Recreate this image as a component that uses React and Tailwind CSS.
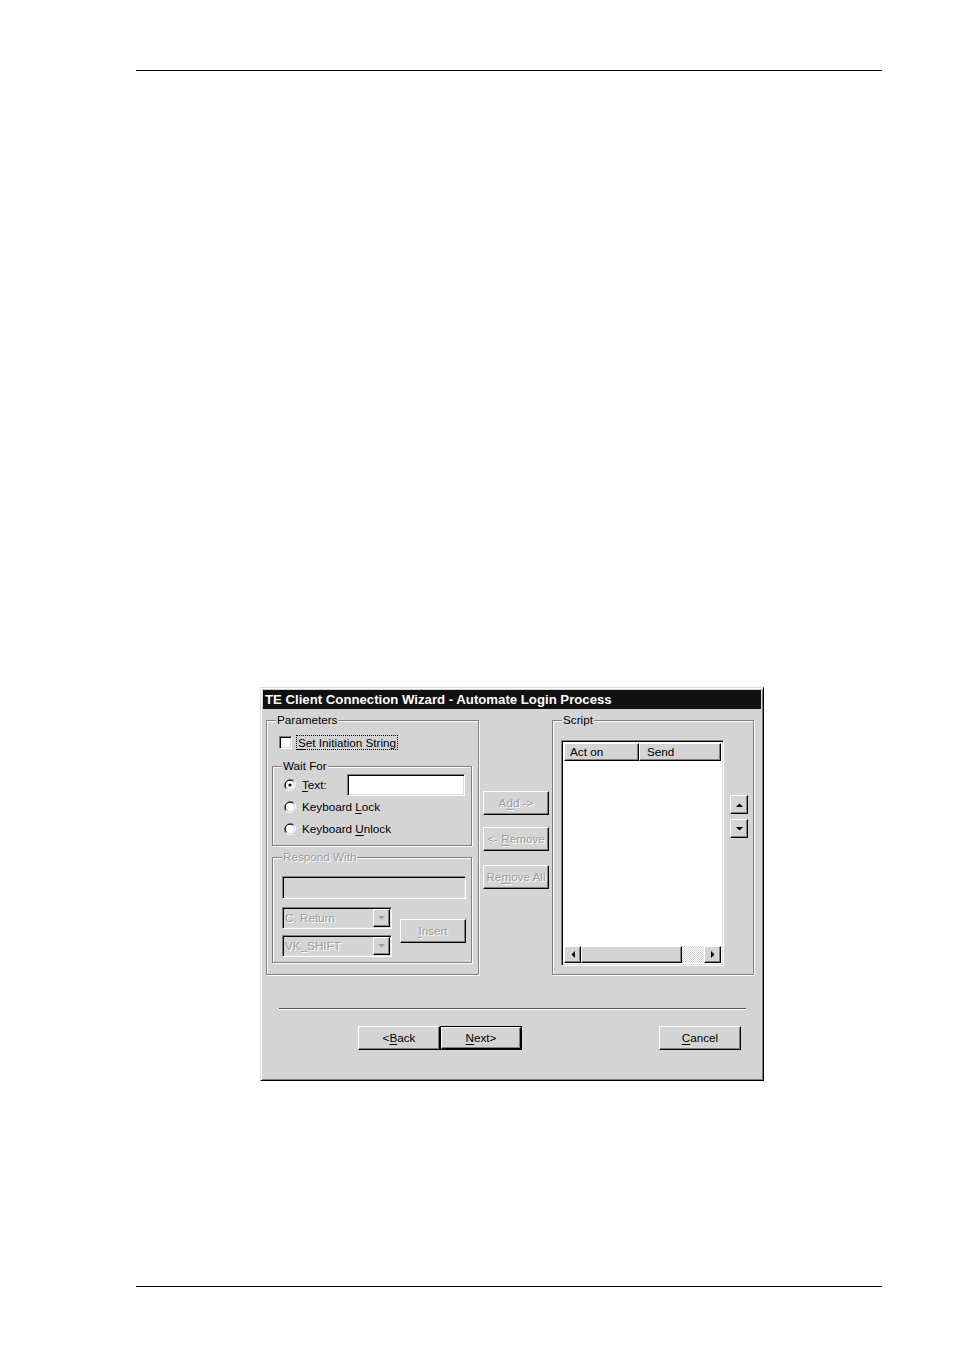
import React from "react";

const raised =
  "border border-t-white border-l-white border-r-black border-b-black shadow-[inset_-1px_-1px_0_#808080]";
const sunken =
  "border border-t-[#808080] border-l-[#808080] border-r-white border-b-white shadow-[inset_1px_1px_0_#000,inset_-1px_-1px_0_#dcdcdc]";
const etched =
  "border border-[#808080] shadow-[inset_1px_1px_0_#fff,1px_1px_0_#fff]";
const disabledText = "text-[#9c9c9c] [text-shadow:1px_1px_0_#fff]";

function Group({ label, disabled, className, children }) {
  return (
    <fieldset className={`${etched} ${className}`}>
      <legend
        className={`ml-[4px] px-[1px] bg-[#d4d4d4] leading-[14px] ${
          disabled ? disabledText : ""
        }`}
      >
        {label}
      </legend>
      {children}
    </fieldset>
  );
}

function Radio({ checked }) {
  return (
    <svg width="12" height="12" viewBox="0 0 12 12" className="shrink-0">
      <path d="M10.2 1.8A6 6 0 0 0 1.8 10.2" fill="none" stroke="#808080" />
      <path d="M9.4 2.6A4.8 4.8 0 0 0 2.6 9.4" fill="none" stroke="#000" />
      <path d="M1.8 10.2A6 6 0 0 0 10.2 1.8" fill="none" stroke="#fff" />
      <path d="M2.6 9.4A4.8 4.8 0 0 0 9.4 2.6" fill="none" stroke="#dcdcdc" />
      <circle cx="6" cy="6" r="4" fill="#fff" />
      {checked && <circle cx="6" cy="6" r="1.6" fill="#000" />}
    </svg>
  );
}

function Tri({ dir, color = "#000" }) {
  const pts = {
    up: "0,4 7,4 3.5,0.5",
    down: "0,0 7,0 3.5,3.5",
    left: "4,0 4,7 0.5,3.5",
    right: "0,0 0,7 3.5,3.5",
  }[dir];
  const vertical = dir === "up" || dir === "down";
  return (
    <svg
      width={vertical ? 7 : 4}
      height={vertical ? 4 : 7}
      viewBox={vertical ? "0 0 7 4" : "0 0 4 7"}
    >
      <polygon points={pts} fill={color} />
    </svg>
  );
}

function Button({ children, disabled, isDefault, className = "" }) {
  const inner = (
    <div
      className={`${raised} bg-[#d4d4d4] h-full flex items-center justify-center ${
        disabled ? disabledText : "text-black"
      }`}
    >
      {children}
    </div>
  );
  return isDefault ? (
    <div className={`border border-black ${className}`}>{inner}</div>
  ) : (
    <div className={className}>{inner}</div>
  );
}

function Combo({ value }) {
  return (
    <div className={`${sunken} bg-[#d4d4d4] w-[110px] h-[22px] flex items-center`}>
      <span className={`flex-1 pl-[2px] ${disabledText}`}>{value}</span>
      <div
        className={`${raised} w-[17px] h-[18px] mr-[1px] flex items-center justify-center`}
      >
        <Tri dir="down" color="#9c9c9c" />
      </div>
    </div>
  );
}

function U({ children }) {
  return <span className="underline underline-offset-[2px]">{children}</span>;
}

export default function App() {
  return (
    <div className="w-[954px] h-[1352px] bg-white pt-[70px] font-['Liberation_Sans',Arial,sans-serif] text-[11.7px] text-black">
      <div className="ml-[136px] w-[746px] h-px bg-black" />

      <div
        className={`mt-[616px] ml-[260px] w-[504px] h-[394px] bg-[#d4d4d4] p-[2px] border border-t-[#dcdcdc] border-l-[#dcdcdc] border-r-black border-b-black shadow-[inset_1px_1px_0_#fff,inset_-1px_-1px_0_#808080]`}
      >
        <div className="h-[19px] bg-[#111] text-white font-bold text-[13.2px] leading-[19px] pl-[2px]">
          TE Client Connection Wizard - Automate Login Process
        </div>

        <div className="flex mt-[4px] ml-[3px]">
          {/* Parameters */}
          <Group
            label="Parameters"
            className="w-[213px] h-[262px] pl-[5px] pt-[8px]"
          >
            <div className="flex items-center h-[14px] ml-[7px]">
              <div className={`${sunken} bg-white w-[13px] h-[13px]`} />
              <span className="ml-[5px] outline outline-1 outline-dotted outline-black px-[1px] leading-[13px]">
                <U>S</U>et Initiation String
              </span>
            </div>

            <Group
              label="Wait For"
              className="mt-[10px] w-[200px] h-[87px] pl-[5px] pt-[1px]"
            >
              <div className="flex items-center h-[22px] ml-[6px]">
                <Radio checked />
                <span className="ml-[6px]">
                  <U>T</U>ext:
                </span>
                <div className={`${sunken} bg-white ml-[20px] w-[118px] h-[22px]`} />
              </div>
              <div className="flex items-center h-[22px] ml-[6px]">
                <Radio />
                <span className="ml-[6px]">
                  Keyboard <U>L</U>ock
                </span>
              </div>
              <div className="flex items-center h-[22px] ml-[6px]">
                <Radio />
                <span className="ml-[6px]">
                  Keyboard <U>U</U>nlock
                </span>
              </div>
            </Group>

            <Group
              label="Respond With"
              disabled
              className="mt-[4px] w-[200px] h-[113px] pl-[5px] pt-[12px]"
            >
              <div className={`${sunken} bg-[#d4d4d4] ml-[4px] w-[184px] h-[23px]`} />
              <div className="flex ml-[4px] mt-[8px]">
                <div className="flex flex-col gap-[6px]">
                  <Combo value="C. Return" />
                  <Combo value="VK_SHIFT" />
                </div>
                <Button disabled className="ml-[8px] mt-[12px] w-[66px] h-[24px]">
                  <U>I</U>nsert
                </Button>
              </div>
            </Group>
          </Group>

          {/* Middle buttons */}
          <div className="ml-[4px] w-[66px] pt-[78px] flex flex-col">
            <Button disabled className="h-[24px]">
              <span>
                A<U>d</U>d -&gt;
              </span>
            </Button>
            <Button disabled className="h-[24px] mt-[12px]">
              <span>
                &lt;- <U>R</U>emove
              </span>
            </Button>
            <Button disabled className="h-[24px] mt-[14px]">
              <span>
                Re<U>m</U>ove All
              </span>
            </Button>
          </div>

          {/* Script */}
          <Group
            label="Script"
            className="ml-[3px] w-[202px] h-[262px] pl-[5px] pt-[13px]"
          >
            <div className="flex ml-[3px]">
              <div className={`${sunken} bg-white w-[163px] h-[226px] p-[2px] flex flex-col`}>
                <div className="flex h-[18px]">
                  <div className={`${raised} bg-[#d4d4d4] w-[75px] pl-[5px] leading-[16px]`}>
                    Act on
                  </div>
                  <div className={`${raised} bg-[#d4d4d4] flex-1 pl-[7px] leading-[16px]`}>
                    Send
                  </div>
                </div>
                <div className="flex-1" />
                <div className="flex h-[17px]">
                  <div className={`${raised} bg-[#d4d4d4] w-[17px] flex items-center justify-center`}>
                    <Tri dir="left" />
                  </div>
                  <div className={`${raised} bg-[#d4d4d4] w-[101px]`} />
                  <div className="flex-1 [background:repeating-conic-gradient(#fff_0_25%,#d4d4d4_0_50%)_0_0/2px_2px]" />
                  <div className={`${raised} bg-[#d4d4d4] w-[17px] flex items-center justify-center`}>
                    <Tri dir="right" />
                  </div>
                </div>
              </div>
              <div className="ml-[6px] mt-[55px] flex flex-col gap-[5px]">
                <div className={`${raised} bg-[#d4d4d4] w-[18px] h-[19px] flex items-center justify-center`}>
                  <Tri dir="up" />
                </div>
                <div className={`${raised} bg-[#d4d4d4] w-[18px] h-[19px] flex items-center justify-center`}>
                  <Tri dir="down" />
                </div>
              </div>
            </div>
          </Group>
        </div>

        {/* Footer */}
        <div className="mt-[33px] ml-[16px] w-[467px] h-[2px] border-t border-[#505050] border-b border-b-white" />
        <div className="flex mt-[16px] ml-[95px]">
          <Button className="w-[82px] h-[24px]">
            <span>
              &lt;<U>B</U>ack
            </span>
          </Button>
          <Button isDefault className="w-[82px] h-[24px]">
            <span>
              <U>N</U>ext&gt;
            </span>
          </Button>
          <Button className="ml-[137px] w-[82px] h-[24px]">
            <span>
              <U>C</U>ancel
            </span>
          </Button>
        </div>
      </div>

      <div className="mt-[205px] ml-[136px] w-[746px] h-px bg-black" />
    </div>
  );
}
